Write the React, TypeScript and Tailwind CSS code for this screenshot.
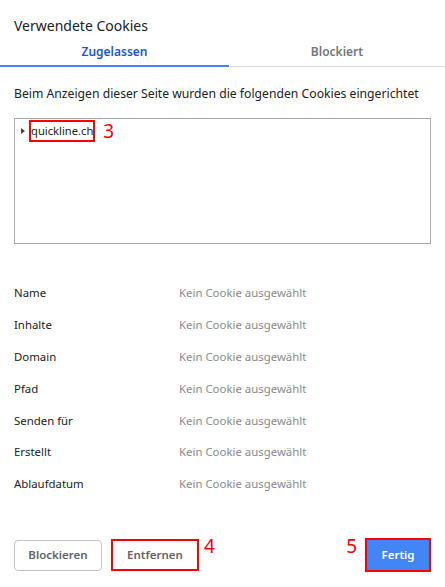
import React from "react";

const rows = ["Name", "Inhalte", "Domain", "Pfad", "Senden für", "Erstellt", "Ablaufdatum"];

export default function App() {
  return (
    <div
      className="w-[445px] h-[587px] bg-white flex flex-col text-[#202124]"
      style={{ fontFamily: '"Noto Sans", "Open Sans", sans-serif' }}
    >
      <div className="px-[14px] pt-[16px] h-[36px] text-[14px] leading-[20px] text-[#202124]">Verwendete Cookies</div>
      <div className="flex h-[31px] border-b border-[#dadce0] relative">
        <div className="w-[229px] flex items-start justify-center pt-[7px] text-[12px] font-semibold text-[#1a56c9] border-b-2 border-[#4285f4] -mb-px">
          Zugelassen
        </div>
        <div className="flex-1 flex items-start justify-center pt-[7px] text-[12px] font-semibold text-[#757575]">
          Blockiert
        </div>
      </div>
      <div className="px-[14px] pt-[18px] h-[51px] text-[12.2px] leading-[18px] text-[#202124]">
        Beim Anzeigen dieser Seite wurden die folgenden Cookies eingerichtet
      </div>
      <div className="mx-[14px] h-[126px] border border-[#a9a9a9] pt-[1px] pl-[4px]">
        <div className="flex items-center h-[22px]">
          <svg width="8" height="8" viewBox="0 0 8 8" className="mr-[2px]">
            <path d="M2 1 L6 4 L2 7 Z" fill="#444" />
          </svg>
          <div className="border-2 border-[#ff0000] h-[22px] px-[0px] flex items-center text-[11.2px] text-[#202124]">
            quickline.ch
          </div>
          <span className="ml-[8px] text-[19px] leading-[20px] text-[#ff0000]">3</span>
        </div>
      </div>
      <div className="px-[14px] pt-[33px] flex flex-col">
        {rows.map((r) => (
          <div key={r} className="flex h-[31.8px] items-center">
            <div className="w-[165px] text-[11.4px] text-[#202124]">{r}</div>
            <div className="text-[11.4px] text-[#8a8a8a]">Kein Cookie ausgewählt</div>
          </div>
        ))}
      </div>
      <div className="mt-auto mb-[15px] px-[14px] flex items-center">
        <button className="w-[88px] h-[31px] rounded-[4px] border border-[#c4c4c4] text-[11.5px] font-semibold text-[#5f6368]">
          Blockieren
        </button>
        <button className="ml-[9px] w-[88px] h-[32px] border-2 border-[#ff0000] text-[11.5px] font-semibold text-[#5f6368]">
          Entfernen
        </button>
        <span className="ml-[5px] self-start -mt-[2px] text-[19px] leading-[20px] text-[#ff0000]">4</span>
        <span className="ml-auto self-start -mt-[2px] text-[19px] leading-[20px] text-[#ff0000]">5</span>
        <button className="ml-[8px] w-[66px] h-[34px] border-2 border-[#ff0000] bg-[#4285f4] text-[11.5px] font-semibold text-white">
          Fertig
        </button>
      </div>
    </div>
  );
}
